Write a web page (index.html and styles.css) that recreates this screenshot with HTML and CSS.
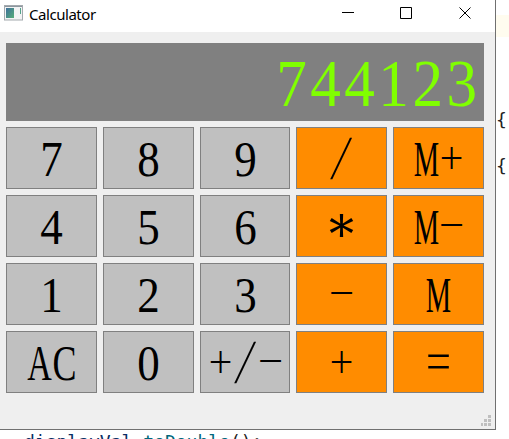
FILE: index.html
```html
<!DOCTYPE html>
<html lang="en">
<head>
<meta charset="utf-8">
<title>Calculator</title>
<link rel="stylesheet" href="styles.css">
</head>
<body>
<div class="desktop">
  <div class="upper">
    <main class="window">
      <header class="titlebar">
        <svg class="app-icon" width="19" height="16" viewBox="0 0 19 16">
          <defs><linearGradient id="g" x1="0" y1="0" x2="1" y2="1"><stop offset="0" stop-color="#3e6f9b"/><stop offset="1" stop-color="#55ad78"/></linearGradient></defs>
          <rect x=".5" y=".5" width="18" height="14.5" fill="#f2f3f4" stroke="#a4a9ae"/>
          <path d="M1 1.5h17" stroke="#8c969e"/>
          <rect x="2" y="3" width="8" height="10" fill="url(#g)"/>
          <path d="M16.500 3v6" stroke="#54a38a"/>
        </svg>
        <span class="title">Calculator</span>
        <svg class="controls" width="132" height="16" viewBox="0 0 132 16" fill="none" stroke="#000">
          <path d="M2 7.5h12M60.500 2.500h11v11h-11zM119.500 2.500l11 11M130.500 2.500l-11 11"/>
        </svg>
      </header>
      <section class="body">
        <div class="display"><span>744123</span></div>
        <div class="keys">
          <button><i class="digit">7</i></button><button><i class="digit">8</i></button><button><i class="digit">9</i></button><button class="op"><i class="slash">/</i></button><button class="op"><i class="m">M</i><i class="plus">+</i></button>
          <button><i class="digit">4</i></button><button><i class="digit">5</i></button><button><i class="digit">6</i></button><button class="op"><i class="star">*</i></button><button class="op"><i class="m">M</i><i class="minus">-</i></button>
          <button><i class="digit">1</i></button><button><i class="digit">2</i></button><button><i class="digit">3</i></button><button class="op"><i class="minus">-</i></button><button class="op"><i class="m">M</i></button>
          <button><i class="a">A</i><i class="c">C</i></button><button><i class="digit zero">0</i></button><button><i class="plus">+</i><i class="slash">/</i><i class="minus">-</i></button><button class="op"><i class="plus">+</i></button><button class="op"><i class="equal">=</i></button>
        </div>
        <svg class="grip" width="11" height="12" viewBox="0 0 11 12" fill="#bfbfbf"><path d="M7 0h3v3h-3zM3 4h3v3h-3zM7 4h3v3h-3zM0 8h2v3h-2zM3 8h3v3h-3zM7 8h3v3h-3z"/></svg>
      </section>
    </main>
    <aside class="editor"><div class="current-line"></div><pre>{

{</pre></aside>
  </div>
  <pre class="code"><b>displayVal</b>.<em>toDouble</em>();</pre>
</div>
</body>
</html>
```
FILE: styles.css
```css
* { box-sizing: border-box; }
body { margin: 0; background: #fff; overflow: hidden; }
pre { margin: 0; font: 18px/23px "DejaVu Sans Mono", monospace; color: #222; }
.desktop { height: 439px; overflow: hidden; }
.upper { display: flex; height: 430px; }
.window { width: 496px; display: flex; flex-direction: column; border: solid #707070; border-width: 0 1px 1px 0; background: #efefef; }
.titlebar { height: 32px; display: flex; align-items: flex-start; background: #fff; padding: 5px 23px 0 4px; }
.title { font: 15px/18px "Noto Sans", sans-serif; letter-spacing: -.45px; margin-left: 6px; color: #000; }
.controls { margin-left: auto; }
.body { flex: 1; display: flex; flex-direction: column; padding: 11px 11px 0 6px; }
.display { height: 78px; background: #808080; color: #80ff00; font: 68px/81px "Liberation Serif", serif; text-align: right; padding-right: 7px; }
.display span { display: inline-block; letter-spacing: 3.8px; margin-right: -3.8px; transform: scaleX(.9); transform-origin: calc(100% - 3.8px) 50%; }
.keys { display: grid; grid-template-columns: 91px 91px 90px 91px 91px; grid-auto-rows: 62px; gap: 6px; margin-top: 6px; }
button { display: flex; justify-content: center; padding: 1px 0 0; margin: 0; border: 1px solid #808080; border-radius: 0; background: #c0c0c0; color: #000; font: 50px/60px "Liberation Serif", serif; }
.op { background: #ff8c00; }
i { display: flex; flex: none; justify-content: center; width: 25px; font-style: normal; }
.digit { transform: scaleX(.9); }
.m { transform: scaleX(.57); }
.a { transform: scaleX(.68); }
.c { transform: scaleX(.72); }
.plus, .equal { font-family: "Inter", sans-serif; font-weight: 200; font-size: 46px; }
.plus { transform: translateY(-6px) scale(.98, 1.1); }
.equal { transform: translateY(-6px) scale(1.2, 1.25); }
.minus { transform: translateY(-4px) scale(1.6, .5); }
.slash { font-family: "Inter", sans-serif; font-weight: 200; transform: translateY(-2px) skewX(-11deg) scaleY(.95); }
.star { font-family: "DejaVu Serif", serif; transform: translateY(8px); }
.grip { margin: auto -8px 2px auto; }
.editor { flex: 1; padding-top: 15px; overflow: hidden; }
.current-line { height: 22px; background: #fffcef; }
.editor pre { margin-top: 71px; padding-left: 0; }
.code { padding-left: 24px; }
.code b { font-weight: 400; color: #092e64; }
.code em { font-style: normal; color: #00677c; }
```
